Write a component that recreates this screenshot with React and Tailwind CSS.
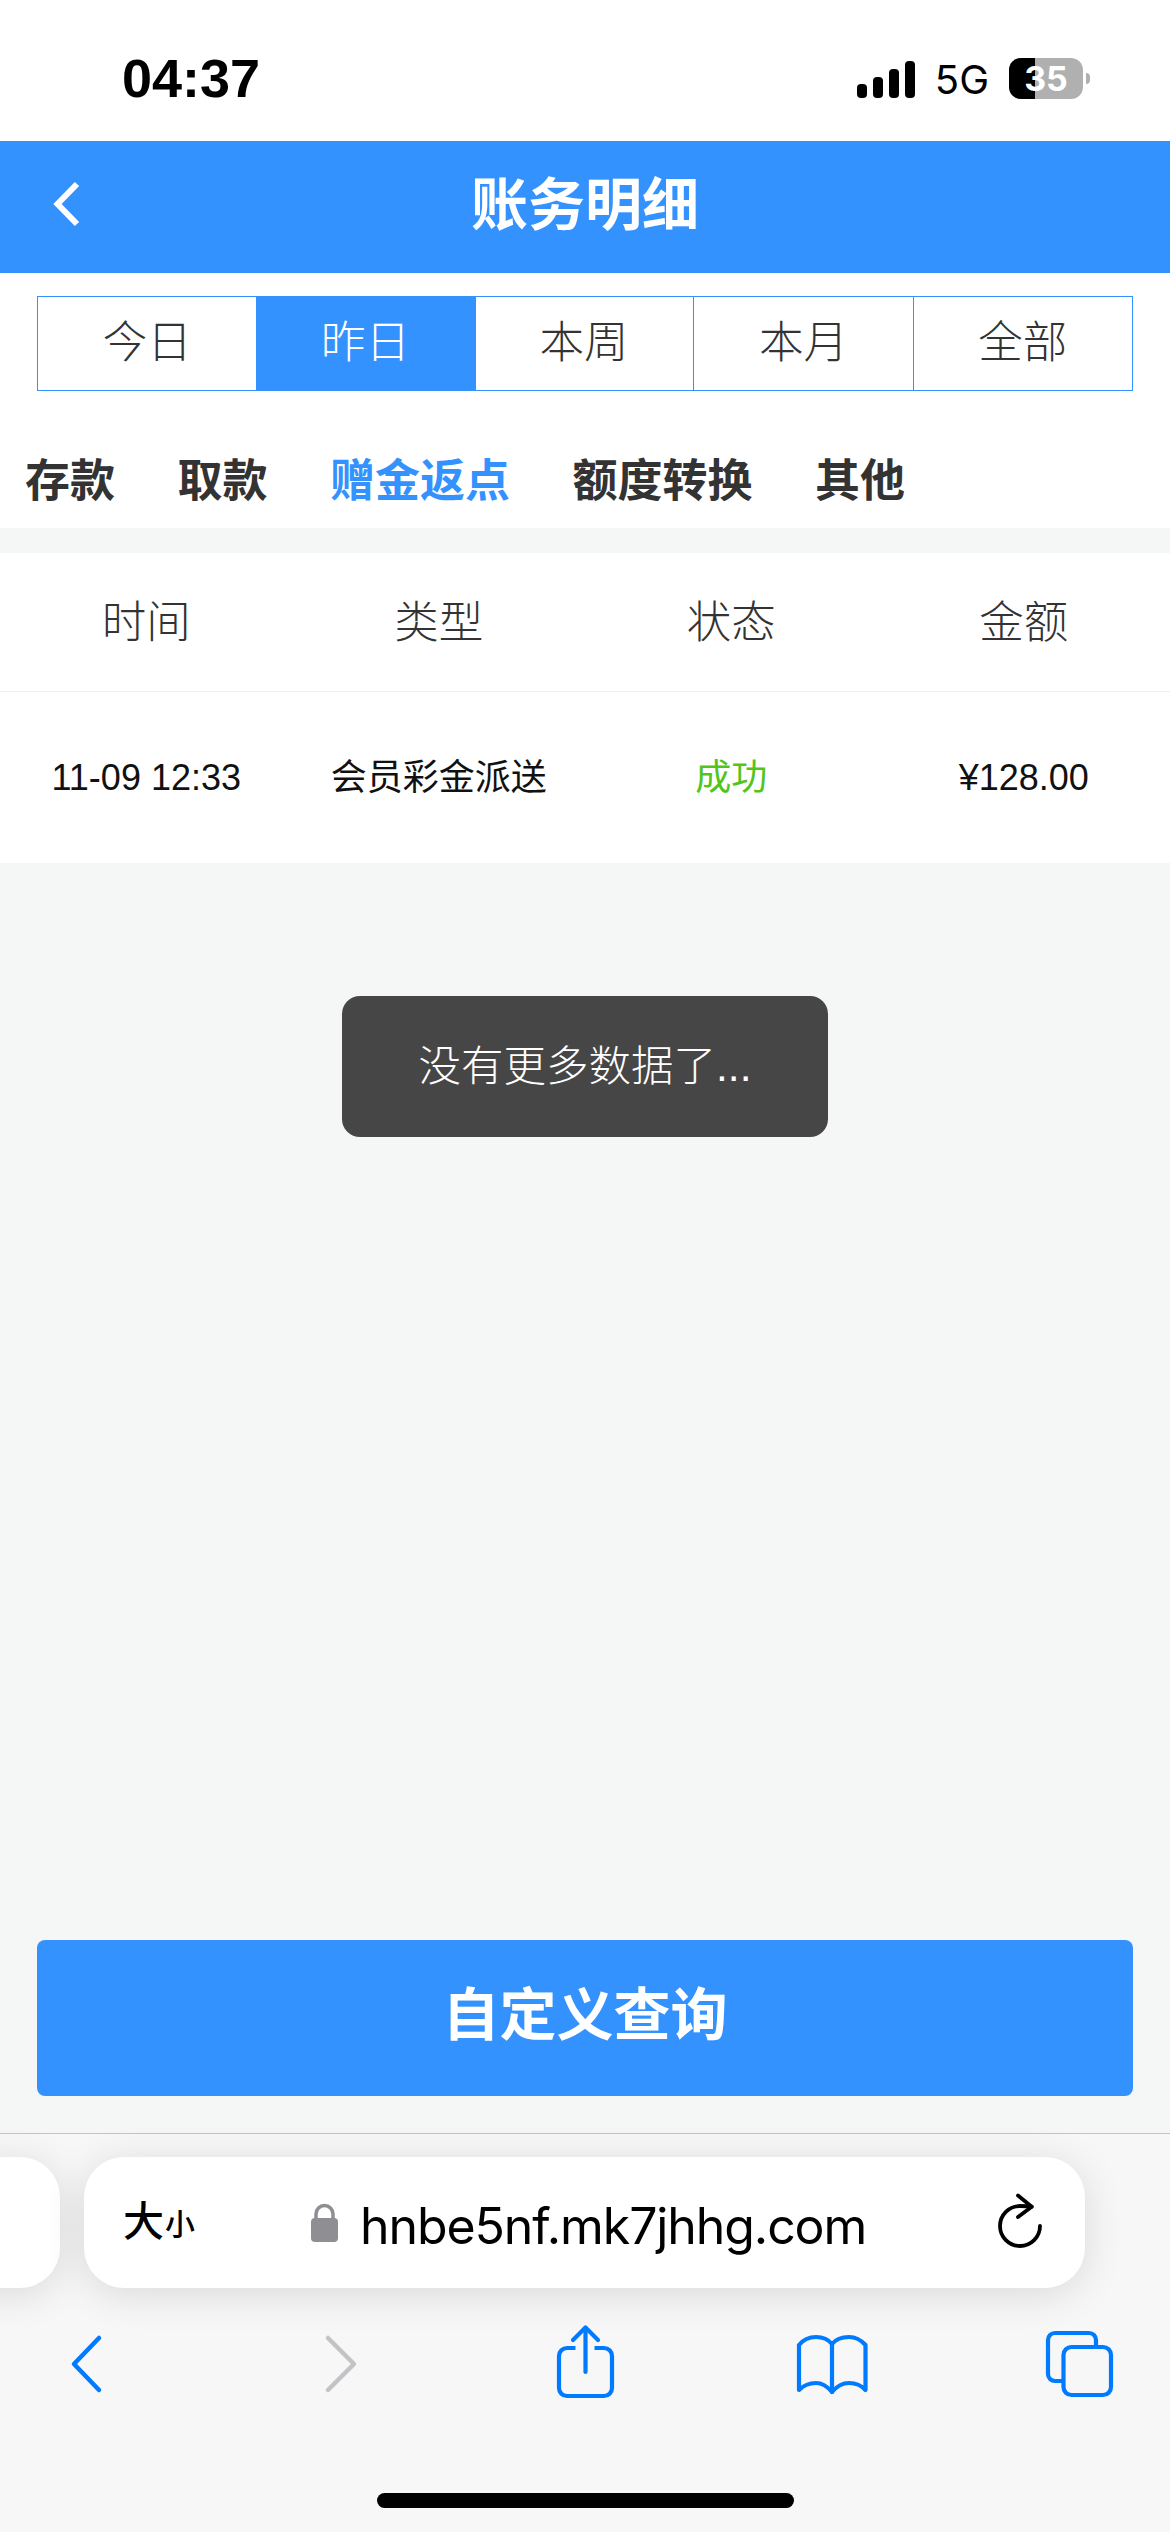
import React from "react";

const sans = "font-['Liberation_Sans','Noto_Sans_CJK_SC',sans-serif]";

function Tab({ label, active, last }) {
  return (
    <div
      className={`flex-1 flex items-center justify-center text-[44.5px] font-light ${last ? "" : "border-r border-[#3492ff]"} ${active ? "bg-[#3492ff] text-white -ml-px -mr-px" : "text-[#333333]"}`}
    >
      {label}
    </div>
  );
}

function Cell({ children, className = "" }) {
  return <div className={`flex-1 flex items-center justify-center ${className}`}>{children}</div>;
}

export default function App() {
  return (
    <div className={`w-[1170px] h-[2532px] flex flex-col bg-[#f5f7f7] overflow-hidden ${sans}`}>
      <div className="h-[141px] bg-white flex items-start justify-between pl-[122px] pr-[87px] pt-[49px]">
        <span className="text-[54px] leading-[58px] font-bold text-black">04:37</span>
        <div className="flex items-center gap-[20px] pt-[8px]">
          <svg width="58" height="38" viewBox="0 0 58 38" fill="#000">
            <rect x="0" y="24" width="10" height="14" rx="4" />
            <rect x="16" y="17" width="10" height="21" rx="4" />
            <rect x="32" y="9" width="10" height="29" rx="4" />
            <rect x="48" y="1" width="10" height="37" rx="4" />
          </svg>
          <span className="text-[40px] leading-[40px] text-black font-['Inter',sans-serif] pt-[3px]">5G</span>
          <div className="relative w-[74px] h-[41px]">
            <div className="absolute right-[-7px] top-[15px] w-[4px] h-[11px] rounded-r-full bg-[#b0b0b0]" />
            <div className="relative w-[74px] h-[41px] rounded-[12px] bg-[#b0b0b0] overflow-hidden flex items-center justify-center">
              <div className="absolute left-0 top-0 bottom-0 w-[26px] bg-black" />
              <span className="relative text-[34px] leading-[40px] font-bold text-white font-['Inter',sans-serif]">35</span>
            </div>
          </div>
        </div>
      </div>

      <div className="relative h-[132px] bg-[#3492ff] flex items-center justify-center">
        <svg className="absolute left-[52px] top-[40px]" width="28" height="46" viewBox="0 0 28 46" fill="none" stroke="#fff" strokeWidth="6" strokeLinejoin="miter">
          <path d="M25 3 L5.5 23 L25 43" />
        </svg>
        <span className="text-[57px] leading-[80px] pb-[4px] font-bold text-white">账务明细</span>
      </div>

      <div className="bg-white h-[255px] flex flex-col">
        <div className="mt-[23px] mx-[37px] h-[95px] flex border border-[#3492ff]">
          <Tab label="今日" />
          <Tab label="昨日" active />
          <Tab label="本周" />
          <Tab label="本月" />
          <Tab label="全部" last />
        </div>
        <div className="flex items-center gap-[62.5px] pl-[25px] mt-[61px] text-[45px] font-bold text-[#333333] leading-[60px]">
          <span>存款</span>
          <span>取款</span>
          <span className="text-[#3492ff]">赠金返点</span>
          <span>额度转换</span>
          <span>其他</span>
        </div>
      </div>

      <div className="mt-[25px] bg-white h-[139px] pt-[2px] flex items-center border-b border-[#efefef] text-[44.5px] font-light text-[#333333]">
        <Cell>时间</Cell>
        <Cell>类型</Cell>
        <Cell>状态</Cell>
        <Cell>金额</Cell>
      </div>
      <div className="bg-white h-[171px] flex items-center text-[36px] text-[#111111]">
        <Cell>11-09 12:33</Cell>
        <Cell>会员彩金派送</Cell>
        <Cell className="text-[#52c41a]">成功</Cell>
        <Cell>¥128.00</Cell>
      </div>

      <div className="flex-1 flex flex-col items-center">
        <div className="mt-[133px] w-[486px] h-[141px] rounded-[18px] bg-[#464646] flex items-center justify-center text-[42.5px] font-light text-white">
          没有更多数据了...
        </div>
        <div className="mt-auto mb-[37px] w-[1096px] h-[156px] rounded-[8px] bg-[#3492ff] flex items-center justify-center text-[57px] leading-[80px] pb-[6px] font-bold text-white">
          自定义查询
        </div>
      </div>

      <div className="relative h-[399px] bg-[#f7f7f8] border-t border-[#c4c4c4]">
        <div className="absolute left-[-40px] top-[23px] w-[100px] h-[131px] rounded-[40px] bg-white shadow-[0_6px_40px_rgba(0,0,0,0.12)]" />
        <div className="absolute left-[84px] top-[23px] w-[1001px] h-[131px] rounded-[40px] bg-white shadow-[0_6px_40px_rgba(0,0,0,0.12)]">
          <span className="absolute left-[39px] top-[41px] text-[41px] leading-[48px] font-medium text-black">大</span>
          <span className="absolute left-[81px] top-[50px] text-[30px] leading-[36px] font-medium text-black">小</span>
          <svg className="absolute left-[227px] top-[46px]" width="27" height="39" viewBox="0 0 27 39" fill="#8e8e93">
            <path d="M5 17 V11 a8.5 8.5 0 0 1 17 0 V17" fill="none" stroke="#8e8e93" strokeWidth="3.5" />
            <rect x="0" y="15" width="27" height="24" rx="4" />
          </svg>
          <span className="absolute left-[276px] top-[41px] text-[50px] leading-[56px] tracking-[-1.1px] text-black font-['Inter',sans-serif]">hnbe5nf.mk7jhhg.com</span>
          <svg className="absolute left-[912px] top-[36px]" width="48" height="56" viewBox="0 0 48 56" fill="none" stroke="#000" strokeWidth="3.8" strokeLinecap="round" strokeLinejoin="round">
            <path d="M44 33 A20 20 0 1 1 24 13 C28 13 32 13 35.7 13.7" />
            <path d="M22 2.5 L35.7 13.7 L22 24" />
          </svg>
        </div>

        <svg className="absolute left-[66px] top-[200px]" width="40" height="60" viewBox="0 0 40 60" fill="none" stroke="#007aff" strokeWidth="4.5" strokeLinecap="round" strokeLinejoin="round">
          <path d="M33 4 L8 30 L33 56" />
        </svg>
        <svg className="absolute left-[321px] top-[200px]" width="40" height="60" viewBox="0 0 40 60" fill="none" stroke="#c4c4c6" strokeWidth="4.5" strokeLinecap="round" strokeLinejoin="round">
          <path d="M7 4 L33 30 L7 56" />
        </svg>
        <svg className="absolute left-[555px] top-[190px]" width="60" height="78" viewBox="0 0 60 78" fill="none" stroke="#007aff" strokeWidth="4.2" strokeLinecap="round" strokeLinejoin="round">
          <path d="M20.5 24 H12 a8 8 0 0 0 -8 8 V64 a8 8 0 0 0 8 8 H49 a8 8 0 0 0 8 -8 V32 a8 8 0 0 0 -8 -8 H39.5" strokeLinecap="butt" />
          <path d="M30.5 48 V4" />
          <path d="M18 16 L30.5 3.5 L43 16" />
        </svg>
        <svg className="absolute left-[795px] top-[199px]" width="74" height="62" viewBox="0 0 74 62" fill="none" stroke="#007aff" strokeWidth="4.2" strokeLinecap="round" strokeLinejoin="round">
          <path d="M37 11 C33 6 27 4 21 4 C14 4 8 7 4 12 V57 C9 52 14 50 21 50 C27 50 32 53 37 59 C42 53 47 50 54 50 C61 50 66 52 70.5 57 V12 C66 7 60 4 54 4 C47 4 41 6 37 11 Z" />
          <path d="M37 11 V59" />
        </svg>
        <svg className="absolute left-[1044px] top-[195px]" width="70" height="70" viewBox="0 0 70 70" fill="none" stroke="#007aff" strokeWidth="4.2" strokeLinecap="butt" strokeLinejoin="round">
          <path d="M19.5 52 H11 a7 7 0 0 1 -7 -7 V11 a7 7 0 0 1 7 -7 H45 a7 7 0 0 1 7 7 V18" />
          <rect x="19.5" y="18" width="47.5" height="48" rx="8" />
        </svg>
        <div className="absolute left-[377px] top-[359px] w-[417px] h-[15px] rounded-full bg-black" />
      </div>
    </div>
  );
}
